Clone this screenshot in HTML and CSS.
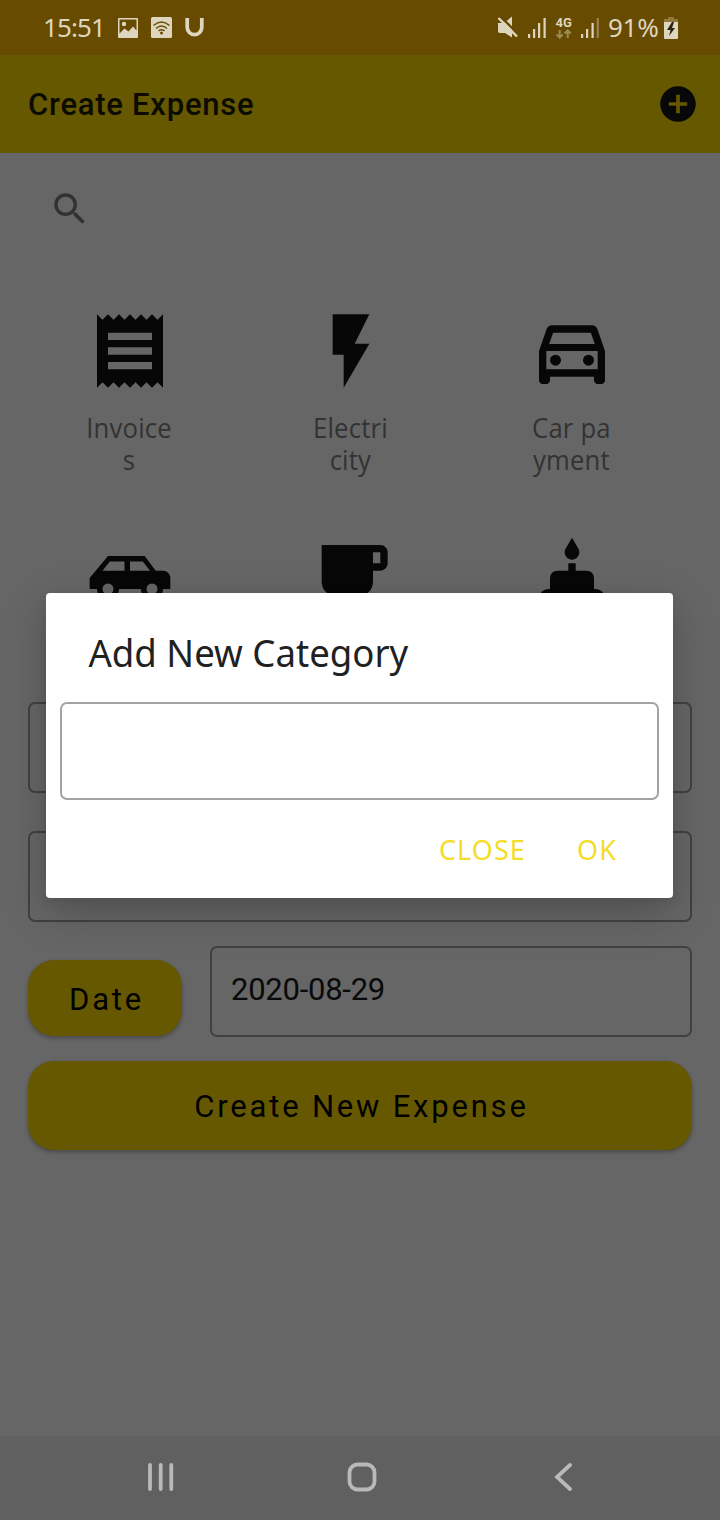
FILE: index.html
```html
<!DOCTYPE html>
<html lang="en">
<head>
<meta charset="utf-8">
<title>Create Expense</title>
<link rel="stylesheet" href="styles.css">
</head>
<body>
<div class="screen">
  <header class="status">
    <span class="clock">15:51</span>
    <svg class="notices" width="88" height="22" viewBox="0 0 88 22">
      <path fill-rule="evenodd" d="M2 1h18q1 0 1 1v18q0 1-1 1H2q-1 0-1-1V2q0-1 1-1zM2.500 2.500v14l5-5 4 3 4.500-5 3.500 4V2.500z"/>
      <circle cx="7" cy="7" r="2.200"/>
      <rect x="34" y="0" width="21" height="21" rx="1.500"/>
      <g fill="none" stroke="#664b00" stroke-width="1.500"><path d="M36.500 8.500q8-7 16 0M39 11.500q5.500-5 11 0M41.500 14q3-2.500 6 0"/></g>
      <circle cx="44.500" cy="16" r="1.500" fill="#664b00"/>
      <path d="M70.200 1v9.300a7.300 7.300 0 0 0 14.600 0V1" fill="none" stroke="#ded5bf" stroke-width="3.700"/>
    </svg>
    <svg class="signals" width="104" height="24" viewBox="0 0 104 24">
      <path d="M1 7h6l8-6.500v21L8 17H3q-2 0-2-2z"/>
      <path d="M2.500-.5l20 20" stroke="#664b00" stroke-width="2.400"/>
      <path d="M1.500 2l18.500 18.500" stroke="#ded5bf" stroke-width="2.400"/>
      <path d="M31 18h2.200v4H31zM36 13h2.200v9H36zM41 7h2.200v15H41zM46.500 2h2.200v20h-2.200zM84 18h2.200v4H84zM89 13h2.200v9H89zM94.500 7h2.200v15h-2.200z"/>
      <path opacity=".4" d="M99.700 2h2.200v20h-2.200z"/>
      <text x="58.500" y="11" class="network">4G</text>
      <path d="M62.700 14v7.500m-3-3 3 3 3-3M70.700 22v-7.500m-3 3 3-3 3 3" fill="none" stroke="#9d8c58" stroke-width="2"/>
    </svg>
    <span class="percent">91%</span>
    <svg class="battery" width="14" height="22" viewBox="0 0 14 22">
      <path d="M4 0h6v2h4v3H0V2h4z" fill="#90783f"/>
      <path d="M0 5h14v16q0 1-1 1H1q-1 0-1-1z"/>
      <path d="M8 5 3 13h3.500L5 19l6-8H8l2-6z" fill="#2b2410"/>
    </svg>
  </header>

  <div class="appbar">
    <h1>Create Expense</h1>
    <svg width="44" height="44" viewBox="0 0 24 24"><path d="M12 2.300a9.700 9.700 0 1 0 0 19.400 9.700 9.700 0 0 0 0-19.400zm5 10.700h-4v4h-2v-4H7v-2h4V7h2v4h4z"/></svg>
  </div>

  <main>
    <div class="search">
      <svg width="42" height="42" viewBox="0 0 24 24"><path d="M15.500 14h-.79l-.28-.27A6.470 6.470 0 0 0 16 9.500 6.500 6.500 0 1 0 9.500 16c1.610 0 3.090-.59 4.230-1.570l.27.28v.79l5 4.990L20.490 19l-4.990-5zm-6 0C7.010 14 5 11.990 5 9.500S7.010 5 9.500 5 14 7.010 14 9.500 11.990 14 9.500 14z"/></svg>
    </div>
    <div class="categories">
      <div class="category">
        <svg viewBox="0 0 24 24"><path d="M18 17H6v-2h12v2zm0-4H6v-2h12v2zm0-4H6V7h12v2zM3 22l1.500-1.500L6 22l1.500-1.500L9 22l1.500-1.500L12 22l1.500-1.500L15 22l1.500-1.500L18 22l1.500-1.500L21 22V2l-1.500 1.500L18 2l-1.500 1.500L15 2l-1.500 1.500L12 2l-1.500 1.500L9 2 7.500 3.500 6 2 4.500 3.500 3 2v20z"/></svg>
        <span>Invoice<br>s</span>
      </div>
      <div class="category">
        <svg viewBox="0 0 24 24"><path d="M7 2v11h3v9l7-12h-4l4-8z"/></svg>
        <span>Electri<br>city</span>
      </div>
      <div class="category">
        <svg viewBox="0 0 24 24"><path d="M18.920 6.010C18.720 5.420 18.160 5 17.500 5h-11c-.66 0-1.210.42-1.420 1.010L3 12v8c0 .55.45 1 1 1h1c.55 0 1-.45 1-1v-1h12v1c0 .55.45 1 1 1h1c.55 0 1-.45 1-1v-8l-2.080-5.990zM6.850 7h10.290l1.080 3.110H5.770L6.850 7zM19 17H5v-5h14v5z"/><circle cx="7.500" cy="14.500" r="1.500"/><circle cx="16.500" cy="14.500" r="1.500"/></svg>
        <span>Car pa<br>yment</span>
      </div>
      <div class="category">
        <svg viewBox="0 0 24 24"><path fill-rule="evenodd" d="M16 6H6l-5 6v3h2a3 3 0 0 0 6 0h6a3 3 0 0 0 6 0h2v-3c0-1.110-.89-2-2-2h-2l-3-4zM6.500 7.500h4V10h-6l2-2.500zm5.500 0h3.500l1.960 2.500H12V7.500zM6 13.500a1.500 1.500 0 1 1 0 3 1.500 1.500 0 0 1 0-3zm12 0a1.500 1.500 0 1 1 0 3 1.500 1.500 0 0 1 0-3z"/></svg>
      </div>
      <div class="category">
        <svg viewBox="0 0 24 24"><path d="M20 3H4v10c0 2.210 1.790 4 4 4h6c2.210 0 4-1.790 4-4v-3h2c1.110 0 2-.89 2-2V5c0-1.110-.89-2-2-2zm0 5h-2V5h2v3z"/></svg>
      </div>
      <div class="category">
        <svg viewBox="0 0 24 24"><path d="M12 7c1.110 0 2-.9 2-2 0-.38-.1-.73-.29-1.030L12 1l-1.710 2.970c-.19.3-.29.65-.29 1.030 0 1.100.9 2 2 2zM11 8h2v2h3a2 2 0 0 1 2 2v3h.500a2.500 2.500 0 0 1 2.500 2.500V22H3v-4.500A2.500 2.500 0 0 1 5.500 15H6v-3a2 2 0 0 1 2-2h3z"/></svg>
      </div>
    </div>

    <div class="form">
      <div class="field"></div>
      <div class="field"></div>
      <div class="date-row">
        <button class="btn date">Date</button>
        <div class="field value">2020-08-29</div>
      </div>
      <button class="btn create">Create New Expense</button>
    </div>
  </main>

  <nav>
    <svg width="26" height="28" viewBox="0 0 26 28"><path d="M2 2v24M12.700 2v24M23.300 2v24"/></svg>
    <svg class="home" width="30" height="30" viewBox="0 0 30 30"><rect x="2.500" y="2.500" width="25" height="25" rx="8"/></svg>
    <svg width="18" height="28" viewBox="0 0 18 28"><path d="M16 2 3 14l13 12"/></svg>
  </nav>

  <div class="dialog" role="dialog">
    <h2>Add New Category</h2>
    <div class="entry"></div>
    <div class="actions"><span>CLOSE</span><span>OK</span></div>
  </div>
</div>
</body>
</html>
```
FILE: styles.css
```css
* { box-sizing: border-box; }
body { margin: 0; }
.screen {
  position: relative;
  width: 720px;
  height: 1520px;
  display: flex;
  flex-direction: column;
  background: #666;
  overflow: hidden;
  font-family: "Noto Sans", sans-serif;
}
svg { display: block; flex: none; }
h1, h2 { margin: 0; }

.status {
  height: 55px;
  flex: none;
  display: flex;
  align-items: center;
  padding: 0 42px 0 43px;
  background: #664b00;
  color: #ded5bf;
  fill: #ded5bf;
  font-size: 26px;
}
.clock { width: 74px; letter-spacing: -0.9px; padding-bottom: 1px; }
.signals { margin-left: auto; }
.network { font: bold 13px Roboto, sans-serif; }
.percent { width: 63px; padding: 0 0 1px 7px; white-space: nowrap; letter-spacing: -0.3px; }

.appbar {
  height: 98px;
  flex: none;
  display: flex;
  align-items: center;
  justify-content: space-between;
  padding: 0 20px 0 28px;
  background: #665800;
  fill: #080808;
}
.appbar h1 {
  padding-top: 1px;
  font: 500 31px Roboto, sans-serif;
  letter-spacing: 0.75px;
  color: #0b0b00;
}

main { flex: 1; min-height: 0; }
.search { height: 154px; padding: 35px 0 0 49px; fill: #323232; }
.categories {
  height: 395px;
  padding: 0 37px 0 19px;
  margin-right: -18px;
  display: grid;
  grid-template-columns: repeat(3, 221px);
  grid-auto-rows: 227px;
  overflow: hidden;
}
.category { display: flex; flex-direction: column; align-items: center; }
.category svg { width: 88px; height: 88px; fill: #070707; }
.category span {
  margin-top: 17px;
  font-family: "Open Sans", sans-serif;
  font-size: 27px;
  line-height: 32px;
  letter-spacing: 0.2px;
  text-align: center;
  transform: scaleX(.95);
  color: #333;
}

.form { padding: 0 28px; display: flex; flex-direction: column; }
.field {
  height: 91px;
  margin-bottom: 38px;
  border: 2px solid #414141;
  border-radius: 7px;
}
.field + .field { margin-bottom: 24px; }
.date-row { display: flex; gap: 28px; margin-bottom: 24px; }
.value {
  flex: 1;
  margin: 0;
  padding: 23px 19px;
  font: 31px/37px Roboto, sans-serif;
  letter-spacing: -0.25px;
  color: #0a0a0a;
}
.btn {
  border: 0;
  border-radius: 26px;
  background: #665800;
  box-shadow: 0 2px 4px rgba(0, 0, 0, .3);
  font: 31px Roboto, sans-serif;
  letter-spacing: 2.8px;
  color: #000;
}
.date { width: 154px; height: 76px; margin-top: 14px; padding: 2px 0 0 3px; }
.create { height: 89px; padding: 2px 0 0 3px; }

nav {
  height: 84px;
  flex: none;
  display: flex;
  align-items: center;
  justify-content: space-between;
  padding: 0 148px 2px;
  background: #606060;
  fill: none;
  stroke: #b9b9b9;
  stroke-width: 3.8px;
  stroke-linecap: round;
}
.home { margin-right: 5px; }

.dialog {
  position: absolute;
  left: 46px;
  top: 593px;
  width: 627px;
  height: 305px;
  padding: 0 14px;
  background: #fff;
  border-radius: 4px;
  box-shadow: 0 14px 44px rgba(0, 0, 0, .22), 0 4px 12px rgba(0, 0, 0, .06);
}
.dialog h2 {
  height: 109px;
  padding: 34px 0 0 30px;
  font-weight: 400;
  font-size: 38.5px;
  line-height: 50px;
  white-space: nowrap;
  transform: scaleX(.95);
  transform-origin: left;
  color: #212121;
}
.entry { height: 98px; border: 2px solid #a3a3a3; border-radius: 7px; }
.actions {
  display: flex;
  justify-content: flex-end;
  gap: 51px;
  padding: 32px 42px 0 0;
  font-size: 27px;
  line-height: 36px;
  letter-spacing: 1.1px;
  color: #f5dc28;
}
```
